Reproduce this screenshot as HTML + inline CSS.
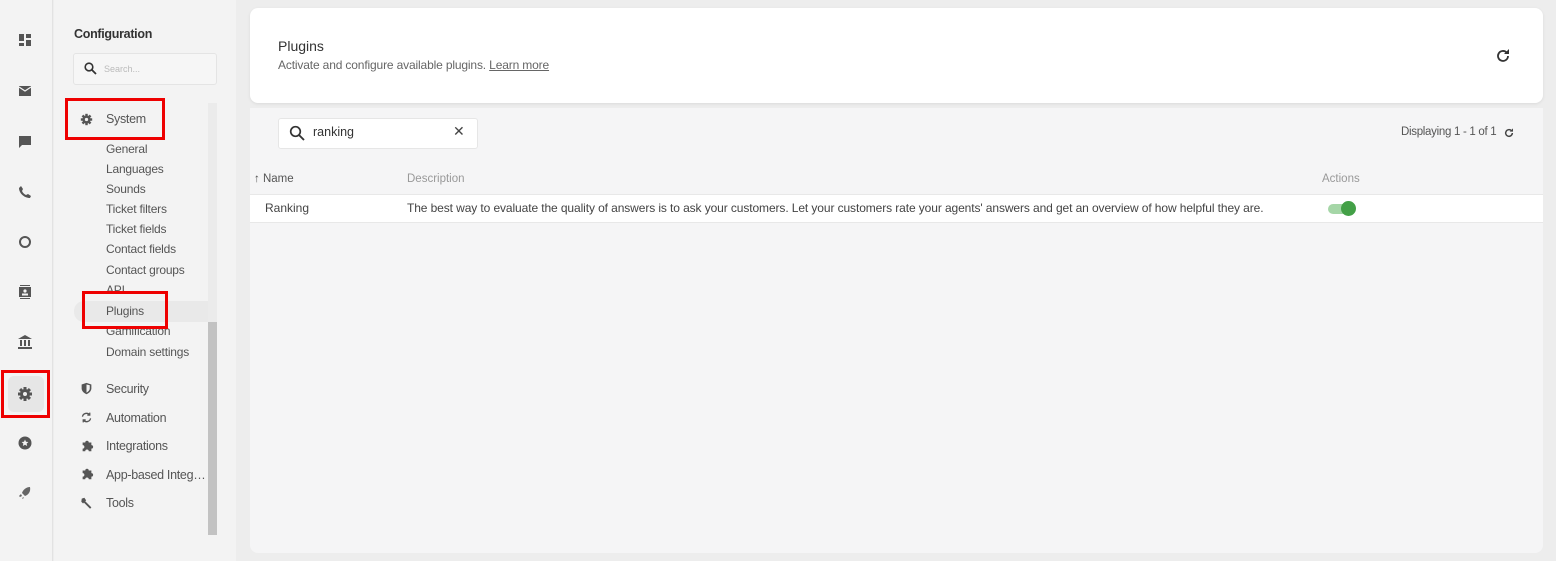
<!DOCTYPE html>
<html><head><meta charset="utf-8"><style>
*{box-sizing:border-box;margin:0;padding:0}
body{width:1556px;height:561px;background:#ededed;font-family:"Liberation Sans",sans-serif;position:relative;overflow:hidden;color:#333}
.abs{position:absolute}
.rail{left:0;top:0;width:53px;height:561px;background:#f3f3f3;border-right:1px solid #e2e2e2}
.ic{position:absolute;left:17px;width:16px;height:16px}
.cfg{left:54px;top:0;width:182px;height:561px;background:#f3f3f3}
.nav{position:absolute;left:106px;font-size:12px;color:#555;letter-spacing:-0.2px}
.sec{position:absolute;left:106px;font-size:12.5px;color:#555;letter-spacing:-0.3px;white-space:nowrap}
.red{position:absolute;border:3px solid #e00;}
.card{left:250px;top:8px;width:1293px;height:95px;background:#fff;border-radius:8px;box-shadow:0 1px 3px rgba(0,0,0,.08)}
.panel{left:250px;top:108px;width:1293px;height:445px;background:#f5f5f6;border-radius:0 0 8px 8px}
</style></head><body>
<svg width="0" height="0" style="position:absolute"><defs>
<g id="gear"><g fill="#555"><rect x="6.5" y="1" width="3" height="14"/><rect x="6.5" y="1" width="3" height="14" transform="rotate(45 8 8)"/><rect x="6.5" y="1" width="3" height="14" transform="rotate(90 8 8)"/><rect x="6.5" y="1" width="3" height="14" transform="rotate(135 8 8)"/><circle cx="8" cy="8" r="5"/></g><circle cx="8" cy="8" r="2" fill="#f0f0f0"/></g>
</defs></svg>
<div class="abs rail">
<svg class="ic" style="top:32px" viewBox="0 0 16 16" fill="#555"><rect x="2" y="2" width="5" height="7"/><rect x="9" y="2" width="5" height="4"/><rect x="2" y="11" width="5" height="3"/><rect x="9" y="8" width="5" height="6"/></svg>
<svg class="ic" style="top:83px" viewBox="0 0 16 16" fill="#555"><path d="M2 3h12v10H2z"/><path d="M2 4l6 4 6-4" stroke="#f3f3f3" stroke-width="1.2" fill="none"/></svg>
<svg class="ic" style="top:134px" viewBox="0 0 16 16" fill="#555"><path d="M2 2h12v9H5l-3 3z"/></svg>
<svg class="ic" style="top:184px" viewBox="0 0 16 16" fill="#555"><path d="M4 2l2 3-1 2c1 2 2 3 4 4l2-1 3 2-1 2C7 14 2 9 2 4z"/></svg>
<svg class="ic" style="top:234px" viewBox="0 0 16 16"><circle cx="8" cy="8" r="5" fill="none" stroke="#555" stroke-width="2"/></svg>
<svg class="ic" style="top:284px" viewBox="0 0 16 16" fill="#555"><rect x="2" y="3" width="12" height="10"/><rect x="3" y="1" width="10" height="1"/><rect x="3" y="14" width="10" height="1"/><circle cx="8" cy="7" r="1.6" fill="#f3f3f3"/><rect x="5" y="9.5" width="6" height="2" fill="#f3f3f3"/></svg>
<svg class="ic" style="top:334px" viewBox="0 0 16 16" fill="#555"><path d="M8 1l7 4H1z"/><rect x="3" y="6" width="2" height="6"/><rect x="7" y="6" width="2" height="6"/><rect x="11" y="6" width="2" height="6"/><rect x="1" y="13" width="14" height="2"/></svg>
<div class="abs" style="left:8px;top:376px;width:36px;height:36px;background:#e6e6e6;border-radius:6px"></div>
<svg class="ic" style="top:386px" viewBox="0 0 16 16"><use href="#gear"/></svg>
<div class="red" style="left:1px;top:370px;width:49px;height:48px"></div>
<svg class="ic" style="top:435px" viewBox="0 0 16 16"><circle cx="8" cy="8" r="6.5" fill="#555"/><path d="M8 4.5l1 2.3 2.4.2-1.8 1.6.6 2.4L8 9.7 5.8 11l.6-2.4L4.6 7l2.4-.2z" fill="#f3f3f3"/></svg>
<svg class="ic" style="top:485px" viewBox="0 0 16 16" fill="#666"><path d="M13 2c-4 0-7 3-8 6l3 3c3-1 6-4 5-9z M4 9l-2 2 1 1 2-1z M6 12l-1 2 2-1z"/></svg>
</div>
<div class="abs cfg">
<div class="abs" style="left:20px;top:27px;font-size:12.5px;font-weight:bold;color:#333;letter-spacing:-0.3px">Configuration</div>
<div class="abs" style="left:19px;top:53px;width:144px;height:32px;border:1px solid #e4e4e4;border-radius:3px;background:#f6f6f6"></div>
<svg class="abs" style="left:30px;top:62px" width="13" height="13" viewBox="0 0 13 13"><circle cx="5" cy="5" r="3.8" fill="none" stroke="#333" stroke-width="1.6"/><path d="M8 8l4 4" stroke="#333" stroke-width="1.8"/></svg>
<div class="abs" style="left:50px;top:64px;font-size:9px;color:#bbb">Search...</div>
<div class="abs" style="left:154px;top:103px;width:9px;height:432px;background:#ebebeb"></div>
<div class="abs" style="left:154px;top:322px;width:9px;height:213px;background:#c2c2c2"></div>
<div class="abs" style="left:20px;top:301px;width:134px;height:21px;background:#e9e9e9;border-radius:10px 0 0 10px"></div>
</div>
<svg class="abs" style="left:80px;top:113px" width="13" height="13" viewBox="0 0 16 16"><use href="#gear"/></svg>
<div class="sec" style="top:112px">System</div>
<div class="red" style="left:65px;top:98px;width:100px;height:42px"></div>
<div class="nav" style="top:142px">General</div>
<div class="nav" style="top:162px">Languages</div>
<div class="nav" style="top:182px">Sounds</div>
<div class="nav" style="top:202px">Ticket filters</div>
<div class="nav" style="top:222px">Ticket fields</div>
<div class="nav" style="top:242px">Contact fields</div>
<div class="nav" style="top:263px">Contact groups</div>
<div class="nav" style="top:283px">API</div>
<div class="nav" style="top:304px">Plugins</div>
<div class="nav" style="top:324px">Gamification</div>
<div class="nav" style="top:345px">Domain settings</div>
<div class="red" style="left:82px;top:291px;width:86px;height:38px"></div>
<svg class="abs" style="left:80px;top:382px" width="13" height="13" viewBox="0 0 16 16"><path d="M8 1l6 2v5c0 3-3 6-6 7-3-1-6-4-6-7V3z" fill="#555"/><path d="M8 3v10c2-1 4-3 4-5V4z" fill="#f3f3f3"/></svg>
<div class="sec" style="top:382px">Security</div>
<svg class="abs" style="left:80px;top:411px" width="13" height="13" viewBox="0 0 16 16" fill="none" stroke="#555" stroke-width="1.6"><path d="M3 7a5 5 0 0 1 9-2M13 9a5 5 0 0 1-9 2"/><path d="M12 2v3H9M4 14v-3h3"/></svg>
<div class="sec" style="top:411px">Automation</div>
<svg class="abs" style="left:80px;top:439px" width="14" height="14" viewBox="0 0 16 16" fill="#555"><path d="M3 4h3a2 2 0 1 1 4 0h3v3a2 2 0 1 1 0 4v3H10a2 2 0 1 0-4 0H3v-3a2 2 0 1 0 0-4z"/></svg>
<div class="sec" style="top:439px">Integrations</div>
<svg class="abs" style="left:80px;top:467px" width="14" height="14" viewBox="0 0 16 16" fill="#555"><path d="M3 4h3a2 2 0 1 1 4 0h3v3a2 2 0 1 1 0 4v3H10a2 2 0 1 0-4 0H3v-3a2 2 0 1 0 0-4z"/></svg>
<div class="sec" style="top:468px;width:100px;overflow:hidden;text-overflow:ellipsis">App-based Integrations</div>
<svg class="abs" style="left:80px;top:496px" width="14" height="14" viewBox="0 0 16 16"><path d="M2 3l3-1 2 3-1 1 7 7-1.5 1.5-7-7-1 1-2-2z" fill="#555"/></svg>
<div class="sec" style="top:496px">Tools</div>

<div class="abs card">
<div class="abs" style="left:28px;top:30px;font-size:14px;color:#333">Plugins</div>
<div class="abs" style="left:28px;top:50px;font-size:12px;color:#666;letter-spacing:-0.15px">Activate and configure available plugins. <span style="text-decoration:underline">Learn more</span></div>
<svg class="abs" style="left:1244px;top:39px" width="18" height="18" viewBox="0 0 18 18"><path d="M14 9a5 5 0 1 1-1.5-3.6" fill="none" stroke="#333" stroke-width="1.8"/><path d="M15 2v5h-5z" fill="#333"/></svg>
</div>
<div class="abs panel">
<div class="abs" style="left:28px;top:10px;width:200px;height:31px;background:#fff;border:1px solid #e6e6e6;border-radius:3px"></div>
<svg class="abs" style="left:39px;top:17px" width="16" height="16" viewBox="0 0 16 16"><circle cx="6.5" cy="6.5" r="4.8" fill="none" stroke="#333" stroke-width="1.7"/><path d="M10 10l5 5" stroke="#333" stroke-width="1.9"/></svg>
<div class="abs" style="left:63px;top:17px;font-size:12.5px;color:#333">ranking</div>
<div class="abs" style="left:203px;top:15px;font-size:14px;color:#444">✕</div>
<div class="abs" style="left:1151px;top:18px;font-size:11.5px;color:#555;letter-spacing:-0.3px">Displaying 1 - 1 of 1</div>
<svg class="abs" style="left:1253px;top:19px" width="12" height="12" viewBox="0 0 18 18"><path d="M14 9a5 5 0 1 1-1.5-3.6" fill="none" stroke="#444" stroke-width="2.2"/><path d="M15 2v5h-5z" fill="#444"/></svg>
<div class="abs" style="left:4px;top:65px;font-size:11.5px;color:#555">↑ Name</div>
<div class="abs" style="left:157px;top:65px;font-size:11.5px;color:#999">Description</div>
<div class="abs" style="left:1072px;top:65px;font-size:11.5px;color:#999">Actions</div>
<div class="abs" style="left:0;top:86px;width:1293px;height:29px;background:#fff;border-top:1px solid #e8e8e8;border-bottom:1px solid #e8e8e8"></div>
<div class="abs" style="left:15px;top:93px;font-size:12px;color:#444">Ranking</div>
<div class="abs" style="left:157px;top:93px;font-size:12px;color:#444;letter-spacing:-0.1px;white-space:nowrap">The best way to evaluate the quality of answers is to ask your customers. Let your customers rate your agents' answers and get an overview of how helpful they are.</div>
<div class="abs" style="left:1078px;top:96px;width:26px;height:10px;border-radius:5px;background:#a5d6a7"></div>
<div class="abs" style="left:1091px;top:93px;width:15px;height:15px;border-radius:50%;background:#43a047"></div>
</div>
</body></html>
